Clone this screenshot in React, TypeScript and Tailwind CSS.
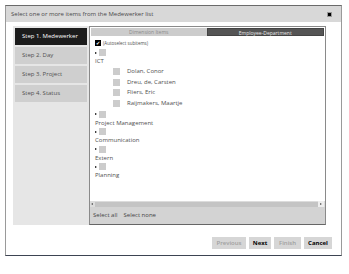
import React from 'react';

const font = { fontFamily: '"Open Sans", "Noto Sans", sans-serif' };

const steps = ['Step 1. Medewerker', 'Step 2. Day', 'Step 3. Project', 'Step 4. Status'];

const people = ['Dolan, Conor', 'Dreu, de, Carsten', 'Fliers, Eric', 'Raijmakers, Maartje'];

const groups = ['Project Management', 'Communication', 'Extern', 'Planning'];

const Node: React.FC<{ label: string }> = ({ label }) => (
  <div className="flex flex-col">
    <div className="flex items-center h-[9px]">
      <span className="w-0 h-0 border-y-[1.5px] border-y-transparent border-l-[2px] border-l-black mr-[2px]" />
      <span className="w-[7px] h-[7px] bg-[#cccccc]" />
    </div>
    <div className="h-[8px] leading-[8px] text-[#505050]">{label}</div>
  </div>
);

const App: React.FC = () => (
  <div className="w-[349px] h-[274px] bg-white pt-[5px] pl-[5px]" style={font}>
    <div className="w-[337px] h-[251px] border border-[#9a9a9a] border-t-[#6a6a6a] border-b-[#3d4452] flex flex-col text-[6px]">
      <div className="h-[16px] bg-[#d8d8d8] flex items-center justify-between pl-[5px] pr-[9px] text-[#4a4a4a]">
        <span>Select one or more items from the Medewerker list</span>
        <span className="w-[5px] h-[5px] border border-[#999] bg-black" />
      </div>
      <div className="flex pl-[7px] pt-[4px]">
        <div className="w-[76px] h-[199px] bg-[#e6e6e6] px-[2px] pt-[2px] flex flex-col gap-[2px]">
          {steps.map((s, i) => (
            <div
              key={s}
              className={`h-[17px] flex items-center pl-[7px] ${i === 0 ? 'bg-[#1c1c1c] text-white' : 'bg-[#cfcfcf] text-[#505050]'}`}
            >
              {s}
            </div>
          ))}
        </div>
        <div className="w-[237px] h-[199px] border border-[#8a8a8a] border-b-[#666] flex flex-col">
          <div className="flex h-[8px] mx-[1px] mt-[1px] text-[5px] leading-[8px]">
            <div className="flex-1 bg-[#cccccc] text-[#8a8a8a] text-center">Dimension Items</div>
            <div className="flex-1 bg-[#555555] text-[#e6e6e6] text-center border border-[#444]">Employee-Department</div>
          </div>
          <div className="flex-1 px-[5px] pt-[3px] text-[#505050]">
            <div className="flex items-center h-[8px] gap-[2px]">
              <span className="w-[6px] h-[6px] bg-black text-white text-[5px] leading-[6px] flex items-center justify-center">✔</span>
              <span className="text-[4.5px]">(Autoselect subitems)</span>
            </div>
            <div className="mt-[1px]">
              <Node label="ICT" />
              <div className="flex flex-col pl-[18px] mt-[1px]">
                {people.map((p) => (
                  <div key={p} className="flex items-center h-[10.7px] gap-[7px]">
                    <span className="w-[7px] h-[7px] bg-[#cccccc]" />
                    <span>{p}</span>
                  </div>
                ))}
              </div>
              <div className="flex flex-col gap-[0.5px] mt-[1px]">
                {groups.map((g) => (
                  <Node key={g} label={g} />
                ))}
              </div>
            </div>
          </div>
          <div className="h-[6px] flex items-center bg-[#dcdcdc] px-[1px]">
            <span className="w-0 h-0 border-y-[1.5px] border-y-transparent border-r-[2px] border-r-[#555] mr-[2px]" />
            <div className="flex-1 h-[5px] bg-[#c4c4c4]" />
            <div className="w-[6px] h-[6px] bg-[#eeeeee] flex items-center justify-center">
              <span className="w-0 h-0 border-y-[1.5px] border-y-transparent border-l-[2px] border-l-[#555]" />
            </div>
          </div>
          <div className="h-[17px] bg-[#d3d3d3] flex items-center gap-[6px] pl-[3px] text-[#444]">
            <span>Select all</span>
            <span>Select none</span>
          </div>
        </div>
      </div>
      <div className="flex justify-end gap-[3px] pr-[9px] mt-[12px]">
        <div className="w-[34px] h-[12px] bg-[#d6d6d6] text-[#a0a0a0] flex items-center justify-center font-semibold">Previous</div>
        <div className="w-[22px] h-[12px] bg-[#d6d6d6] text-black flex items-center justify-center font-bold">Next</div>
        <div className="w-[27px] h-[12px] bg-[#d6d6d6] text-[#a0a0a0] flex items-center justify-center font-semibold">Finish</div>
        <div className="w-[28px] h-[12px] bg-[#d6d6d6] text-black flex items-center justify-center font-bold">Cancel</div>
      </div>
    </div>
  </div>
);

export default App;
